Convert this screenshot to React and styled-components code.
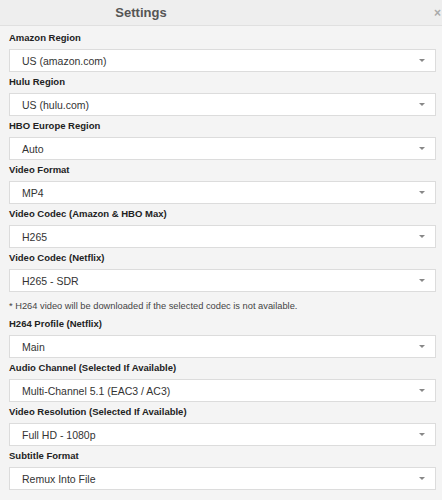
import React from 'react';
import styled, { createGlobalStyle } from 'styled-components';

const GlobalStyle = createGlobalStyle`
  html, body {
    margin: 0;
    padding: 0;
    background: #f4f4f4;
    font-family: "Liberation Sans", Arial, sans-serif;
    overflow: hidden;
  }
`;

const Page = styled.div`
  width: 442px;
  height: 500px;
  overflow: hidden;
  background: #f4f4f4;
`;

const Header = styled.div`
  display: flex;
  align-items: center;
  height: 25px;
  background: #eeeeee;
  border-bottom: 1px solid #e0e0e0;
`;

const Title = styled.div`
  width: 282px;
  text-align: center;
  font-size: 13px;
  font-weight: bold;
  color: #555;
`;

const Close = styled.div`
  margin-left: auto;
  margin-right: 1px;
  font-size: 12px;
  color: #aaa;
  font-weight: bold;
`;

const Body = styled.div`
  padding: 5px 6px 0 9px;
`;

const Field = styled.div`
  margin-bottom: 3px;
`;

const Label = styled.div`
  font-size: 9.5px;
  font-weight: bold;
  line-height: 14px;
  color: #222;
  margin-bottom: 4px;
`;

const Select = styled.div`
  display: flex;
  align-items: center;
  height: 21px;
  box-sizing: content-box;
  border: 1px solid #dcdcdc;
  background: #fff;
  padding: 0 10px 0 12px;
  font-size: 10.5px;
  color: #333;
`;

const Value = styled.span`
  flex: 1;
`;

const Arrow = styled.span`
  width: 0;
  height: 0;
  border-left: 3px solid transparent;
  border-right: 3px solid transparent;
  border-top: 3px solid #888;
`;

const Note = styled.div`
  font-size: 9.3px;
  line-height: 14px;
  color: #444;
  margin: 7px 0 4px;
`;

const fields = [
  ['Amazon Region', 'US (amazon.com)'],
  ['Hulu Region', 'US (hulu.com)'],
  ['HBO Europe Region', 'Auto'],
  ['Video Format', 'MP4'],
  ['Video Codec (Amazon & HBO Max)', 'H265'],
  ['Video Codec (Netflix)', 'H265 - SDR', true],
  ['H264 Profile (Netflix)', 'Main'],
  ['Audio Channel (Selected If Available)', 'Multi-Channel 5.1 (EAC3 / AC3)'],
  ['Video Resolution (Selected If Available)', 'Full HD - 1080p'],
  ['Subtitle Format', 'Remux Into File'],
];

const App = () => (
  <Page>
    <GlobalStyle />
    <Header>
      <Title>Settings</Title>
      <Close>×</Close>
    </Header>
    <Body>
      {fields.map(([label, value, note]) => (
        <React.Fragment key={label}>
          <Field>
            <Label>{label}</Label>
            <Select>
              <Value>{value}</Value>
              <Arrow />
            </Select>
          </Field>
          {note && (
            <Note>* H264 video will be downloaded if the selected codec is not available.</Note>
          )}
        </React.Fragment>
      ))}
    </Body>
  </Page>
);

export default App;
